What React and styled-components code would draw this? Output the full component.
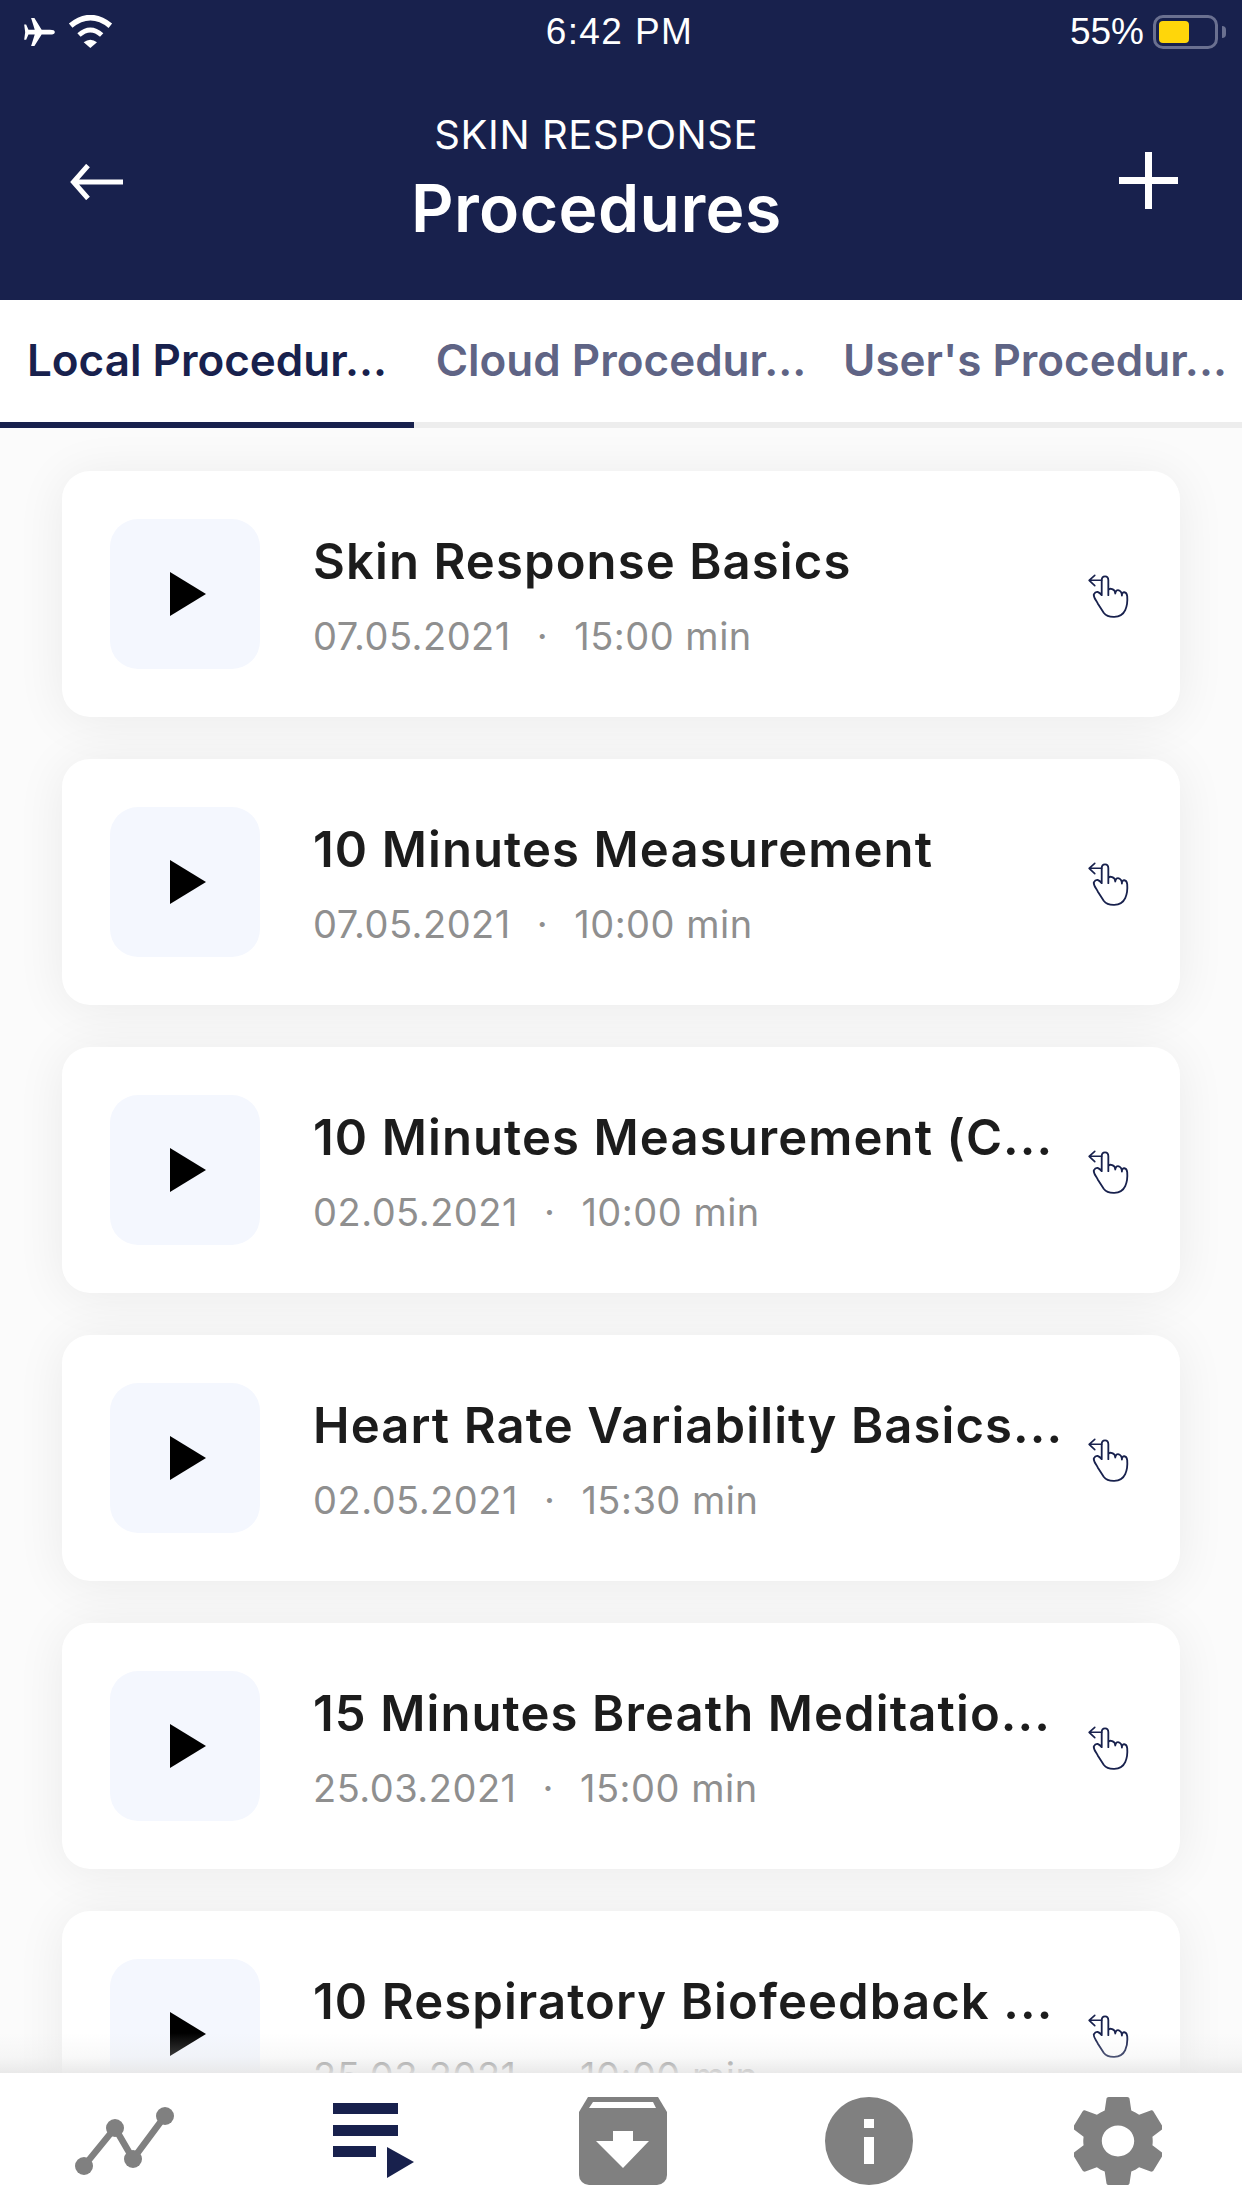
import React from 'react';
import styled, { createGlobalStyle } from 'styled-components';

const navy = '#18214d';
const iconGrey = '#808080';
const uiFont = `Inter, 'Noto Sans', sans-serif`;

const GlobalStyle = createGlobalStyle`
  html, body {
    margin: 0;
    padding: 0;
    background: #fbfbfb;
  }
  * {
    box-sizing: border-box;
  }
`;

const Page = styled.div`
  width: 1242px;
  height: 2208px;
  display: flex;
  flex-direction: column;
  overflow: hidden;
  font-family: ${uiFont};
`;

const Header = styled.header`
  height: 300px;
  flex: none;
  background: ${navy};
  color: #fff;
`;

const StatusBar = styled.div`
  height: 63px;
  padding: 0 24px;
  display: grid;
  grid-template-columns: 1fr auto 1fr;
  align-items: center;
  font-family: 'Liberation Sans', Arial, sans-serif;
  font-size: 37px;
`;

const StatusLeft = styled.div`
  display: flex;
  align-items: center;
  gap: 13px;
`;

const StatusRight = styled.div`
  display: flex;
  align-items: center;
  justify-content: flex-end;
  gap: 9px;
`;

const Clock = styled.span`
  letter-spacing: 1.4px;
  margin-right: 3px;
`;

const Battery = styled.div`
  width: 65px;
  height: 34px;
  padding: 3px;
  border: 3px solid #6a7090;
  border-radius: 10px;
  position: relative;
  &::after {
    content: '';
    position: absolute;
    right: -11px;
    top: 8px;
    width: 4px;
    height: 12px;
    border-radius: 0 4px 4px 0;
    background: #6a7090;
  }
`;

const BatteryLevel = styled.div`
  width: 30px;
  height: 22px;
  border-radius: 4px;
  background: #ffd60a;
`;

const NavRow = styled.div`
  display: grid;
  grid-template-columns: 341px auto 1fr;
  align-items: center;
  padding: 50px 64px 0 70px;
`;

const NavEnd = styled.div`
  display: flex;
  justify-content: ${p => (p.$right ? 'flex-end' : 'flex-start')};
  padding-top: ${p => (p.$right ? 0 : 2)}px;
`;

const TitleBlock = styled.div`
  display: flex;
  flex-direction: column;
  align-items: center;
`;

const Eyebrow = styled.div`
  font-size: 40px;
  line-height: 44px;
  letter-spacing: 0.6px;
`;

const Title = styled.h1`
  margin: 11px 0 0;
  font-size: 66px;
  line-height: 80px;
  font-weight: 600;
  letter-spacing: 0.4px;
`;

const Tabs = styled.nav`
  height: 128px;
  flex: none;
  display: grid;
  grid-template-columns: repeat(3, 414px);
  background: #fff;
  border-bottom: 6px solid #ededed;
`;

const Tab = styled.div`
  height: 128px;
  display: flex;
  align-items: center;
  justify-content: center;
  padding-bottom: 3px;
  font-size: 44px;
  font-weight: 600;
  white-space: nowrap;
  color: ${p => (p.$active ? navy : '#5f6485')};
  border-bottom: 6px solid ${p => (p.$active ? navy : 'transparent')};
`;

const ListArea = styled.main`
  flex: 1;
  min-height: 0;
  position: relative;
  overflow: hidden;
`;

const List = styled.div`
  display: flex;
  flex-direction: column;
  gap: 42px;
  padding: 43px 62px 0;
`;

const Card = styled.article`
  height: 246px;
  flex: none;
  display: flex;
  align-items: center;
  padding: 0 49px 0 48px;
  background: #fff;
  border-radius: 28px;
  box-shadow: 0 4px 50px rgba(0, 0, 0, 0.07);
`;

const Thumb = styled.div`
  width: 150px;
  height: 150px;
  flex: none;
  display: flex;
  align-items: center;
  justify-content: center;
  padding-left: 6px;
  border-radius: 28px;
  background: #f4f7fe;
`;

const Info = styled.div`
  flex: 1;
  min-width: 0;
  margin-left: 53px;
`;

const ItemTitle = styled.div`
  font-size: 49px;
  line-height: 64px;
  font-weight: 600;
  letter-spacing: 1.1px;
  color: #1c1c1c;
  white-space: nowrap;
`;

const Meta = styled.div`
  margin-top: 19px;
  display: flex;
  gap: 26px;
  font-size: 38px;
  line-height: 46px;
  letter-spacing: 0.5px;
  color: #8f8f8f;
  white-space: nowrap;
`;

const Fade = styled.div`
  position: absolute;
  left: 0;
  right: 0;
  bottom: 0;
  height: 40px;
  background: linear-gradient(rgba(230, 230, 230, 0), rgba(230, 230, 230, 0.25) 60%, rgba(230, 230, 230, 0.85));
`;

const BottomBar = styled.footer`
  height: 135px;
  flex: none;
  display: grid;
  grid-template-columns: repeat(5, 1fr);
  align-items: center;
  justify-items: center;
  background: #fff;
`;

const BarIcon = styled.svg`
  display: block;
  flex: none;
  margin-left: ${p => p.$shift || 0}px;
  margin-top: ${p => p.$drop || 0}px;
`;

const Airplane = () => (
  <BarIcon width="31" height="28" viewBox="72 52 93 85" fill="#fff">
    <path d="M165 95Q165 88 150 88L125 88 103 52 93 52 104 88 85 88 78 72 72 72 75 95 72 118 78 118 85 102 104 102 93 137 103 137 125 102 150 102Q165 102 165 95Z" />
  </BarIcon>
);

const Wifi = () => (
  <BarIcon width="45" height="33" viewBox="205 38 135 99">
    <path d="M213 70Q272 22 332 70" fill="none" stroke="#fff" strokeWidth="17" />
    <path d="M238 98Q272 68 306 98" fill="none" stroke="#fff" strokeWidth="15" />
    <path d="M252 120Q272 104 292 120L272 137Z" fill="#fff" />
  </BarIcon>
);

const BackArrow = () => (
  <BarIcon width="53" height="36" viewBox="0 0 53 36" fill="none" stroke="#fff" strokeWidth="5">
    <path d="M53 18H4M18 1.5L3.5 18 18 34.5" />
  </BarIcon>
);

const Plus = () => (
  <BarIcon width="59" height="57" viewBox="0 0 59 57" fill="#fff">
    <path d="M26 0h7v25h26v7H33v25h-7V32H0v-7h26z" />
  </BarIcon>
);

const PlayGlyph = () => (
  <BarIcon width="36" height="44" viewBox="0 0 36 44" fill="#000">
    <path d="M0 0L36 22 0 44Z" />
  </BarIcon>
);

const SwipeHand = () => (
  <BarIcon $drop={3} width="45" height="48" viewBox="140 95 135 145" fill="none" stroke={navy} strokeWidth="5.5" strokeLinecap="round" strokeLinejoin="round">
    <path d="M187 120H150M166 105L149 120 166 136" strokeWidth="5" />
    <path d="M207 165V120C207 104 187 104 187 120V165C180 155 170 150 163 163 162 172 170 180 175 190L193 218C205 234 245 238 258 210 265 195 265 180 264 168 262 153 248 152 248 166 248 150 230 142 228 160 228 146 210 142 207 150" />
  </BarIcon>
);

const ChartIcon = () => (
  <BarIcon width="99" height="68" viewBox="0 0 99 68" fill={iconGrey}>
    <polyline points="9,59 40,21 58,52 90,9" fill="none" stroke={iconGrey} strokeWidth="6.5" />
    <circle cx="9" cy="59" r="9" />
    <circle cx="40" cy="21" r="9" />
    <circle cx="58" cy="52" r="9" />
    <circle cx="90" cy="9" r="9" />
  </BarIcon>
);

const ListIcon = () => (
  <BarIcon $shift={2} width="81" height="75" viewBox="0 0 81 75" fill={navy}>
    <rect x="0" y="0" width="65" height="11" />
    <rect x="0" y="22" width="65" height="11" />
    <rect x="0" y="43" width="43" height="11" />
    <path d="M54 44L81 59 54 75Z" />
  </BarIcon>
);

const ArchiveIcon = () => (
  <BarIcon $shift={4} width="88" height="88" viewBox="0 0 88 88">
    <path d="M9 0H79L88 15V78a10 10 0 0 1-10 10H10A10 10 0 0 1 0 78V15Z" fill={iconGrey} />
    <path d="M14 5H74L77 11H10ZM34 34H54V44H70L44 71 17 44H34Z" fill="#fff" />
  </BarIcon>
);

const InfoIcon = () => (
  <BarIcon width="88" height="88" viewBox="0 0 88 88">
    <circle cx="44" cy="44" r="44" fill={iconGrey} />
    <path d="M39 22h10v9H39zM39 40h10v27H39z" fill="#fff" />
  </BarIcon>
);

const GearIcon = () => (
  <BarIcon width="88" height="88" viewBox="2.5 2 19 20" preserveAspectRatio="none" fill={iconGrey}>
    <path d="M19.43 12.98c.04-.32.07-.64.07-.98s-.03-.66-.07-.98l2.11-1.65c.19-.15.24-.42.12-.64l-2-3.46c-.12-.22-.39-.3-.61-.22l-2.49 1c-.52-.4-1.08-.73-1.69-.98l-.38-2.65C14.46 2.18 14.25 2 14 2h-4c-.25 0-.46.18-.49.42l-.38 2.65c-.61.25-1.17.59-1.69.98l-2.49-1c-.23-.09-.49 0-.61.22l-2 3.46c-.13.22-.07.49.12.64l2.11 1.65c-.04.32-.07.65-.07.98s.03.66.07.98l-2.11 1.65c-.19.15-.24.42-.12.64l2 3.46c.12.22.39.3.61.22l2.49-1c.52.4 1.08.73 1.69.98l.38 2.65c.03.24.24.42.49.42h4c.25 0 .46-.18.49-.42l.38-2.65c.61-.25 1.17-.59 1.69-.98l2.49 1c.23.09.49 0 .61-.22l2-3.46c.12-.22.07-.49-.12-.64l-2.11-1.65zM12 15.5c-1.93 0-3.5-1.57-3.5-3.5s1.57-3.5 3.5-3.5 3.5 1.57 3.5 3.5-1.57 3.5-3.5 3.5z" />
  </BarIcon>
);

const procedures = [
  { title: 'Skin Response Basics', date: '07.05.2021', length: '15:00 min' },
  { title: '10 Minutes Measurement', date: '07.05.2021', length: '10:00 min' },
  { title: '10 Minutes Measurement (C...', date: '02.05.2021', length: '10:00 min' },
  { title: 'Heart Rate Variability Basics...', date: '02.05.2021', length: '15:30 min' },
  { title: '15 Minutes Breath Meditatio...', date: '25.03.2021', length: '15:00 min' },
  { title: '10 Respiratory Biofeedback ...', date: '25.03.2021', length: '10:00 min' }
];

export default function App() {
  return (
    <Page>
      <GlobalStyle />
      <Header>
        <StatusBar>
          <StatusLeft>
            <Airplane />
            <Wifi />
          </StatusLeft>
          <Clock>6:42 PM</Clock>
          <StatusRight>
            <span>55%</span>
            <Battery>
              <BatteryLevel />
            </Battery>
          </StatusRight>
        </StatusBar>
        <NavRow>
          <NavEnd>
            <BackArrow />
          </NavEnd>
          <TitleBlock>
            <Eyebrow>SKIN RESPONSE</Eyebrow>
            <Title>Procedures</Title>
          </TitleBlock>
          <NavEnd $right>
            <Plus />
          </NavEnd>
        </NavRow>
      </Header>
      <Tabs>
        <Tab $active>Local Procedur...</Tab>
        <Tab>Cloud Procedur...</Tab>
        <Tab>User's Procedur...</Tab>
      </Tabs>
      <ListArea>
        <List>
          {procedures.map(item => (
            <Card key={item.title}>
              <Thumb>
                <PlayGlyph />
              </Thumb>
              <Info>
                <ItemTitle>{item.title}</ItemTitle>
                <Meta>
                  <span>{item.date}</span>
                  <span>·</span>
                  <span>{item.length}</span>
                </Meta>
              </Info>
              <SwipeHand />
            </Card>
          ))}
        </List>
        <Fade />
      </ListArea>
      <BottomBar>
        <ChartIcon />
        <ListIcon />
        <ArchiveIcon />
        <InfoIcon />
        <GearIcon />
      </BottomBar>
    </Page>
  );
}
